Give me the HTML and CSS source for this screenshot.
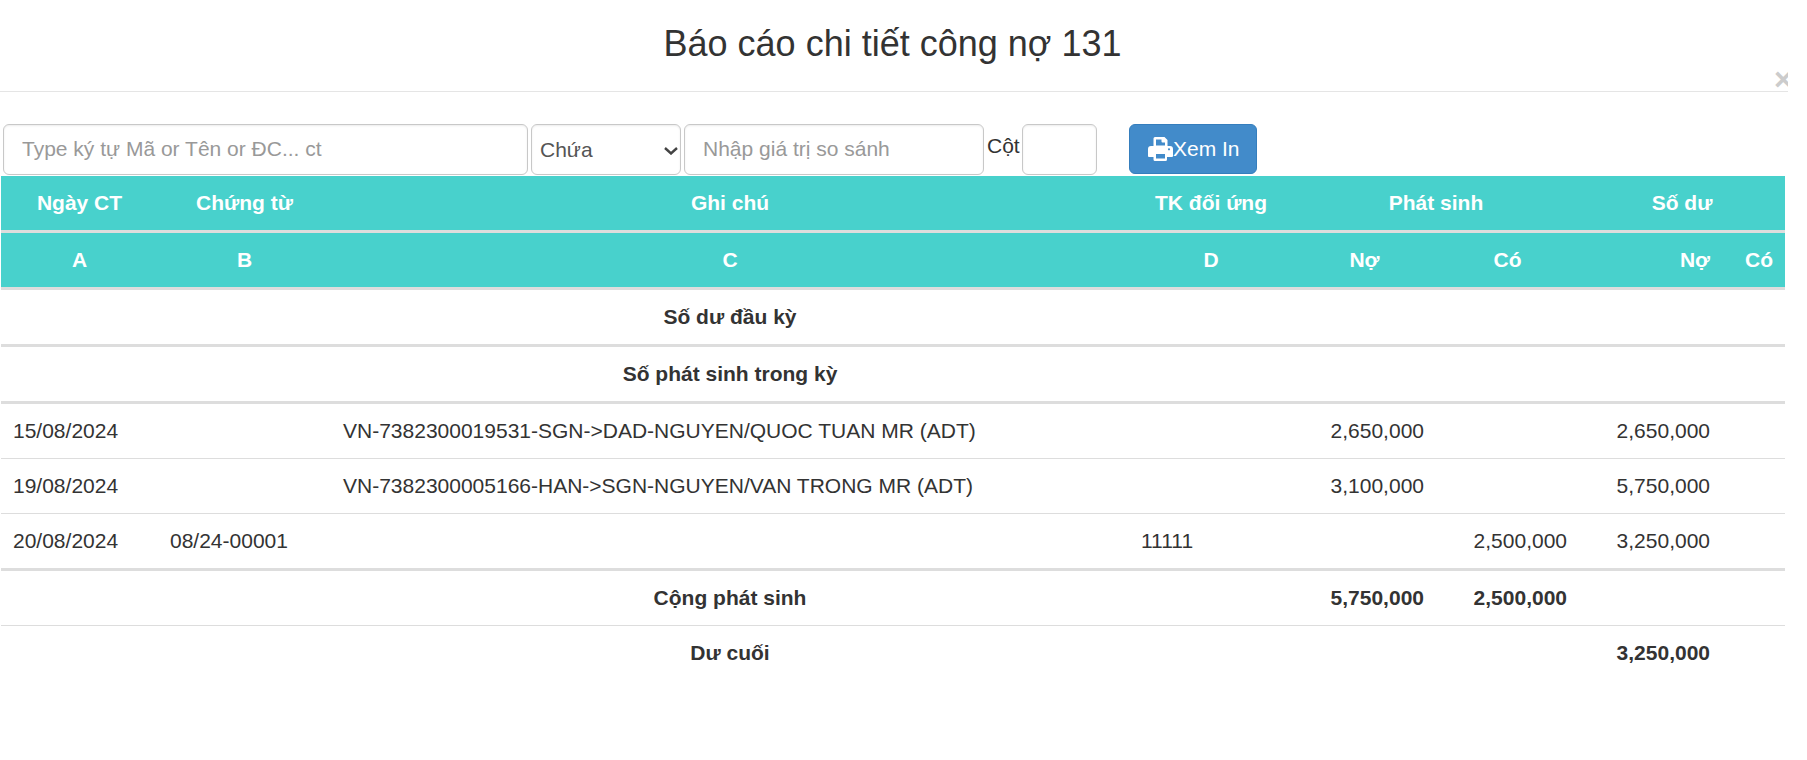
FILE: index.html
```html
<!DOCTYPE html>
<html lang="vi">
<head>
<meta charset="utf-8">
<title>Báo cáo chi tiết công nợ 131</title>
<link rel="stylesheet" href="styles.css">
</head>
<body>
<div class="modal">
  <header class="modal-head">
    <h3 class="modal-title">Báo cáo chi tiết công nợ 131</h3>
    <span class="close">×</span>
  </header>
  <form class="toolbar">
    <input class="field field-search" type="text" placeholder="Type ký tự Mã or Tên or ĐC... ct">
    <select class="field field-select"><option>Chứa</option></select>
    <input class="field field-value" type="text" placeholder="Nhập giá trị so sánh">
    <label class="col-label">Cột</label>
    <input class="field field-col" type="text">
    <button class="btn-print" type="button">
      <svg class="print-icon" viewBox="0 0 25 24" aria-hidden="true"><path fill="#fff" fill-rule="evenodd" d="M5.500 1.500A1.500 1.500 0 0 1 7 0h9.500l3 3v6h2.500a3 3 0 0 1 3 3v7a1 1 0 0 1-1 1h-5v2.500a1.500 1.500 0 0 1-1.500 1.500H7a1.500 1.500 0 0 1-1.500-1.500V20H1a1 1 0 0 1-1-1v-7a3 3 0 0 1 3-3h2.500zM8 2.500v6h9V5.500h-2.500a1 1 0 0 1-1-1v-2zM8 17v4.500h9V17zM21 11.200a1.100 1.100 0 1 0 0 2.200a1.100 1.100 0 0 0 0-2.200z"/></svg>Xem In
    </button>
  </form>
  <table class="report">
    <colgroup>
      <col class="c-a"><col class="c-b"><col class="c-c"><col class="c-d"><col class="c-e"><col class="c-f"><col class="c-g"><col class="c-h">
    </colgroup>
    <thead>
      <tr>
        <th class="center">Ngày CT</th>
        <th class="center">Chứng từ</th>
        <th class="center">Ghi chú</th>
        <th class="center">TK đối ứng</th>
        <th class="center" colspan="2">Phát sinh</th>
        <th class="center" colspan="2">Số dư</th>
      </tr>
      <tr>
        <th class="center">A</th>
        <th class="center">B</th>
        <th class="center">C</th>
        <th class="center">D</th>
        <th class="center">Nợ</th>
        <th class="center">Có</th>
        <th class="right">Nợ</th>
        <th class="right">Có</th>
      </tr>
    </thead>
    <tbody>
      <tr class="heavy">
        <td></td><td></td><td class="center strong">Số dư đầu kỳ</td><td></td><td></td><td></td><td></td><td></td>
      </tr>
      <tr class="heavy">
        <td></td><td></td><td class="center strong">Số phát sinh trong kỳ</td><td></td><td></td><td></td><td></td><td></td>
      </tr>
      <tr>
        <td>15/08/2024</td><td></td><td>VN-7382300019531-SGN-&gt;DAD-NGUYEN/QUOC TUAN MR (ADT)</td><td></td><td class="right">2,650,000</td><td></td><td class="right">2,650,000</td><td></td>
      </tr>
      <tr>
        <td>19/08/2024</td><td></td><td>VN-7382300005166-HAN-&gt;SGN-NGUYEN/VAN TRONG MR (ADT)</td><td></td><td class="right">3,100,000</td><td></td><td class="right">5,750,000</td><td></td>
      </tr>
      <tr class="heavy">
        <td>20/08/2024</td><td>08/24-00001</td><td></td><td>11111</td><td></td><td class="right">2,500,000</td><td class="right">3,250,000</td><td></td>
      </tr>
      <tr>
        <td></td><td></td><td class="center strong">Cộng phát sinh</td><td></td><td class="right strong">5,750,000</td><td class="right strong">2,500,000</td><td></td><td></td>
      </tr>
      <tr class="last">
        <td></td><td></td><td class="center strong">Dư cuối</td><td></td><td></td><td></td><td class="right strong">3,250,000</td><td></td>
      </tr>
    </tbody>
  </table>
</div>
</body>
</html>
```
FILE: styles.css
```css
* { box-sizing: border-box; }
html, body { margin: 0; padding: 0; background: #fff; }
body {
  font-family: "Liberation Sans", Arial, sans-serif;
  font-size: 21px;
  line-height: 30px;
  color: #333;
  overflow: hidden;
}
.modal { width: 1788px; height: 760px; overflow: hidden; position: relative; }
.modal-head { height: 92px; border-bottom: 1px solid #e5e5e5; }
.modal-title {
  margin: 0 3px 0 0;
  padding-top: 24px;
  font-size: 36px;
  font-weight: 400;
  line-height: 40px;
  text-align: center;
}
.close {
  position: absolute;
  top: 63px;
  left: 1774px;
  font-size: 31.5px;
  line-height: 32px;
  font-weight: 700;
  color: #ccc;
}
.toolbar { display: flex; align-items: flex-start; margin: 32px 0 1px 3px; height: 51px; }
.field {
  height: 51px;
  border: 1px solid #c8c8c8;
  border-radius: 6px;
  box-shadow: inset 0 1px 2px rgba(0, 0, 0, .075);
  font: 21px/30px "Liberation Sans", Arial, sans-serif;
  color: #555;
  background: #fff;
  padding: 0 18px 2px;
  margin: 0;
  outline: 0;
}
.field::placeholder { color: #999; opacity: 1; }
.field-search { width: 525px; }
.field-select {
  width: 150px;
  margin-left: 3px;
  padding: 0 0 0 8px;
  appearance: none;
  background: #fff url("data:image/svg+xml,%3Csvg xmlns='http://www.w3.org/2000/svg' width='14' height='8' viewBox='0 0 14 8'%3E%3Cpath d='M1 1l6 5.500L13 1' fill='none' stroke='%23444' stroke-width='2.400'/%3E%3C/svg%3E") no-repeat 132px 22px;
}
.field-value { width: 300px; margin-left: 3px; }
.col-label { margin-left: 3px; width: 35px; line-height: 44px; height: 51px; }
.field-col { width: 75px; }
.btn-print {
  display: flex;
  align-items: center;
  width: 128px;
  height: 50px;
  margin-left: 32px;
  padding: 0 0 0 18px;
  border: 1px solid #357ebd;
  border-radius: 6px;
  background: #428bca;
  color: #fff;
  font: 21px/30px "Liberation Sans", Arial, sans-serif;
}
.print-icon { width: 25px; height: 24px; flex: none; }
.report {
  table-layout: fixed;
  width: 1784px;
  margin-left: 1px;
  border-collapse: separate;
  border-spacing: 0;
}
.c-a { width: 157px; }
.c-b { width: 173px; }
.c-c { width: 798px; }
.c-d { width: 164px; }
.c-e { width: 143px; }
.c-f { width: 143px; }
.c-g { width: 143px; }
.c-h { width: 63px; }
.report th, .report td { padding: 12px; vertical-align: middle; text-align: left; }
.report th {
  background: #48d1cc;
  color: #fff;
  font-weight: 700;
  border-bottom: 3px solid #ddd;
}
.report td { border-bottom: 1px solid #ddd; }
.report tr.heavy td { border-bottom: 3px solid #ddd; }
.report tr.last td { border-bottom: 0; }
.report .center { text-align: center; }
.report .right { text-align: right; }
.strong { font-weight: 700; }
```
